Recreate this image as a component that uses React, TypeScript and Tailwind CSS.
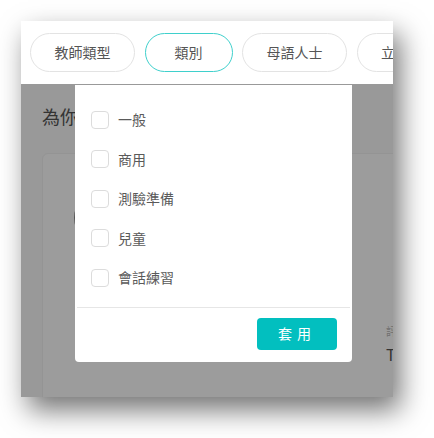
import { useState } from 'react';

const filters = ['教師類型', '類別', '母語人士', '立即上課'];
const categories = ['一般', '商用', '測驗準備', '兒童', '會話練習'];

const font = { fontFamily: '"Noto Sans CJK TC", "Noto Sans", sans-serif' };

function FilterPill({ label, active }: { label: string; active: boolean }) {
  return (
    <button
      className={
        active
          ? 'h-[39px] w-[88px] shrink-0 rounded-full border border-[#3fd0cc] bg-white text-[14px] text-[#555]'
          : 'h-[39px] w-[105px] shrink-0 rounded-full border border-[#e3e3e3] bg-white text-[14px] text-[#555]'
      }
    >
      {label}
    </button>
  );
}

function CategoryDropdown() {
  const [checked, setChecked] = useState<string[]>([]);

  const toggle = (item: string) =>
    setChecked((prev) => (prev.includes(item) ? prev.filter((c) => c !== item) : [...prev, item]));

  return (
    <div className="absolute left-[54px] top-[64px] flex h-[277px] w-[277px] flex-col rounded-b-[4px] bg-white">
      <div className="flex flex-col px-4 pt-[15px]">
        {categories.map((item) => (
          <label key={item} className="flex h-[39.5px] cursor-pointer items-center gap-[9px]">
            <span
              onClick={() => toggle(item)}
              className={
                checked.includes(item)
                  ? 'h-[18px] w-[18px] rounded-[4px] border border-[#02bfbf] bg-[#02bfbf]'
                  : 'h-[18px] w-[18px] rounded-[4px] border border-[#dcdcdc] bg-white'
              }
            />
            <span className="text-[14px] text-[#5a5a5a]">{item}</span>
          </label>
        ))}
      </div>
      <div className="mx-[2px] mt-[9px] border-t border-[#e6e6e6]" />
      <div className="flex justify-end pb-[12px] pr-[15px] pt-[10px]">
        <button className="h-[32px] w-[80px] rounded-[4px] bg-[#02bfbf] text-[14px] tracking-[5px] text-white">
          套用
        </button>
      </div>
    </div>
  );
}

export default function App() {
  return (
    <div className="h-[438px] w-[434px] bg-white p-[21px]" style={font}>
      <div className="relative flex h-[376px] w-[372px] flex-col overflow-hidden bg-[#999] shadow-[7px_13px_26px_rgba(0,0,0,0.55)]">
        <div className="flex h-[63px] shrink-0 items-center gap-[9.5px] bg-white pl-[9px]">
          {filters.map((f) => (
            <FilterPill key={f} label={f} active={f === '類別'} />
          ))}
        </div>

        <div className="flex flex-1 flex-col pl-[21px]">
          <p className="mt-[20px] text-[18px] leading-[24px] text-[#333]">為你推薦的教師</p>
          <div className="mt-[25px] flex h-[300px] w-[400px] rounded-[6px] border border-[#949494] bg-[#9c9c9c] pl-[31px]">
            <div className="mt-[36px] h-[56px] w-[56px] shrink-0 rounded-full bg-[#555]" />
            <div className="ml-[256px] mt-[170px] flex flex-col">
              <span className="text-[11px] leading-[14px] text-[#6e6e6e]">評價</span>
              <span className="mt-[6px] text-[16px] leading-[20px] text-[#333]">TWD</span>
            </div>
          </div>
        </div>

        <CategoryDropdown />
      </div>
    </div>
  );
}
